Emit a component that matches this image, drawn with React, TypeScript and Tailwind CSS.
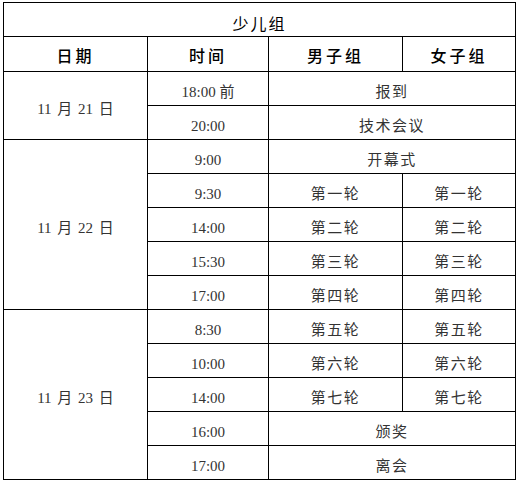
type Row = { time: string; both?: string; boys?: string; girls?: string };

const days: { date: string; rows: Row[] }[] = [
  {
    date: "11 月 21 日",
    rows: [
      { time: "18:00 前", both: "报到" },
      { time: "20:00", both: "技术会议" },
    ],
  },
  {
    date: "11 月 22 日",
    rows: [
      { time: "9:00", both: "开幕式" },
      { time: "9:30", boys: "第一轮", girls: "第一轮" },
      { time: "14:00", boys: "第二轮", girls: "第二轮" },
      { time: "15:30", boys: "第三轮", girls: "第三轮" },
      { time: "17:00", boys: "第四轮", girls: "第四轮" },
    ],
  },
  {
    date: "11 月 23 日",
    rows: [
      { time: "8:30", boys: "第五轮", girls: "第五轮" },
      { time: "10:00", boys: "第六轮", girls: "第六轮" },
      { time: "14:00", boys: "第七轮", girls: "第七轮" },
      { time: "16:00", both: "颁奖" },
      { time: "17:00", both: "离会" },
    ],
  },
];

const cell = "border border-black text-center align-middle p-0 pt-[6px] h-[34px] leading-5";
const body = "text-[15px] tracking-[1.5px] text-[#333]";
const head = "text-[16px] tracking-[3px] text-black font-medium h-[35px]";

export default function App() {
  return (
    <div
      className="bg-white w-[520px] h-[484px] pl-[3px] pt-[2px]"
      style={{ fontFamily: '"Liberation Serif", "Noto Sans CJK SC", serif' }}
    >
      <table className="border-collapse table-fixed w-[512px]">
        <colgroup>
          <col className="w-[144px]" />
          <col className="w-[121px]" />
          <col className="w-[134px]" />
          <col className="w-[113px]" />
        </colgroup>
        <tbody>
          <tr>
            <td colSpan={4} className={`${cell} h-[34px] pt-[10px] text-[16px] tracking-[2px] text-black`}>
              少儿组
            </td>
          </tr>
          <tr>
            <td className={`${cell} ${head}`}>日期</td>
            <td className={`${cell} ${head}`}>时间</td>
            <td className={`${cell} ${head}`}>男子组</td>
            <td className={`${cell} ${head}`}>女子组</td>
          </tr>
          {days.map((day) =>
            day.rows.map((row, i) => (
              <tr key={day.date + row.time + i}>
                {i === 0 && (
                  <td
                    rowSpan={day.rows.length}
                    className={`${cell} ${body} text-[14px] tracking-normal [word-spacing:2px]`}
                  >
                    {day.date}
                  </td>
                )}
                <td className={`${cell} ${body} tracking-normal`}>{row.time}</td>
                {row.both ? (
                  <td colSpan={2} className={`${cell} ${body}`}>
                    {row.both}
                  </td>
                ) : (
                  <>
                    <td className={`${cell} ${body}`}>{row.boys}</td>
                    <td className={`${cell} ${body}`}>{row.girls}</td>
                  </>
                )}
              </tr>
            ))
          )}
        </tbody>
      </table>
    </div>
  );
}
